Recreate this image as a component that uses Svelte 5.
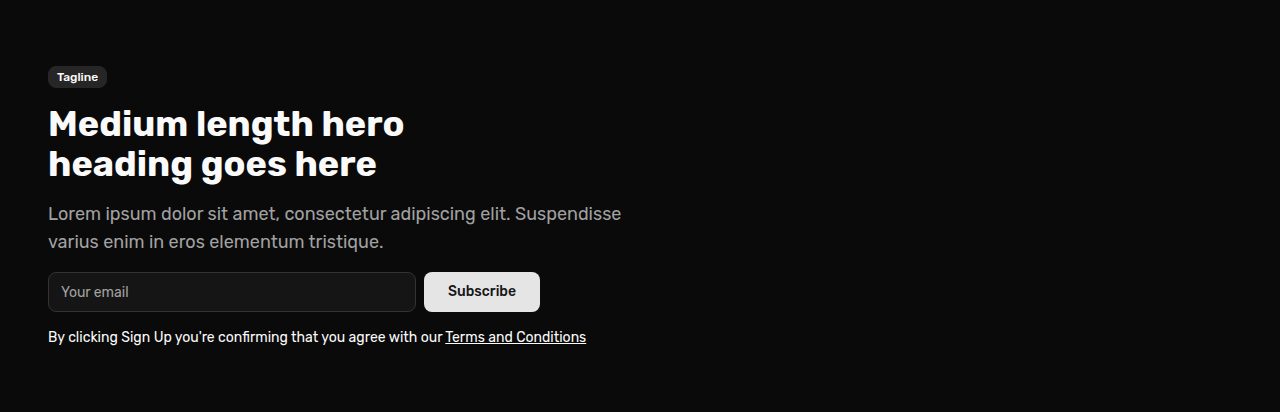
<script>
  let email = $state('');
</script>

<section class="hero">
  <div class="content">
    <span class="badge">Tagline</span>
    <h1>Medium length hero heading goes here</h1>
    <p class="lead">Lorem ipsum dolor sit amet, consectetur adipiscing elit. Suspendisse varius enim in eros elementum tristique.</p>
    <form onsubmit={(e) => e.preventDefault()}>
      <input type="email" aria-label="Your email" placeholder="Your email" bind:value={email} />
      <button type="submit">Subscribe</button>
    </form>
    <p>By clicking Sign Up you're confirming that you agree with our <a href="#terms">Terms and Conditions</a></p>
  </div>
</section>

<style>
  :global(body) {
    margin: 0;
    background: #0a0a0a;
  }
  .hero {
    padding: 66px 48px 64px;
    color: #fafafa;
    font-family: Rubik, Roboto, sans-serif;
    font-size: 14px;
    line-height: 20px;
  }
  .content {
    display: flex;
    flex-direction: column;
    align-items: flex-start;
    gap: 16px;
    max-width: 576px;
  }
  .badge {
    padding: 2px 8px;
    border: 1px solid #262626;
    border-radius: 8px;
    background: #262626;
    font-size: 12px;
    line-height: 16px;
    font-weight: 500;
  }
  h1 {
    margin: 0;
    max-width: 384px;
    font-size: 36px;
    line-height: 40px;
    font-weight: 700;
  }
  p {
    margin: 0;
  }
  .lead {
    color: #a1a1a1;
    font-size: 18px;
    line-height: 28px;
  }
  form {
    display: flex;
    gap: 8px;
    width: 100%;
    max-width: 492px;
  }
  input {
    box-sizing: border-box;
    flex: 1;
    min-width: 0;
    height: 40px;
    padding: 0 12px;
    border: 1px solid #343434;
    border-radius: 8px;
    background: #151515;
    color: inherit;
    font: inherit;
  }
  input::placeholder {
    color: #a1a1a1;
    opacity: 1;
  }
  button {
    height: 40px;
    padding: 0 24px;
    border: 0;
    border-radius: 8px;
    background: #e5e5e5;
    color: #171717;
    font: inherit;
    font-weight: 500;
  }
  a {
    color: inherit;
    text-decoration: underline;
  }
</style>
